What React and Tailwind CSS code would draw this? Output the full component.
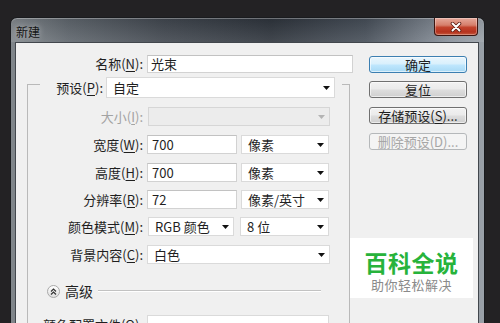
import React from "react";

const Arrow = ({ disabled }) => (
  <svg width="7" height="4" viewBox="0 0 7 4" className="shrink-0">
    <path d="M0 0H7L3.5 4Z" fill={disabled ? "#b4b4b4" : "#111"} />
  </svg>
);

const U = ({ children }) => (
  <span className="underline underline-offset-[2px] decoration-[1px]">{children}</span>
);

function Select({ className, children, disabled }) {
  return (
    <div
      className={
        "h-[19px] border flex items-center justify-between pl-[6px] pr-[4px] " +
        (disabled ? "bg-[#ececec] border-[#d6d6d6]" : "bg-white border-[#dadada]") +
        " " +
        className
      }
    >
      <span className="leading-[17px] whitespace-nowrap">{children}</span>
      <Arrow disabled={disabled} />
    </div>
  );
}

function Input({ className, children }) {
  return (
    <div
      className={
        "h-[19px] bg-white border border-[#d2d2d2] border-t-[#c2c2c2] flex items-center pl-[4px] leading-[17px] " +
        className
      }
    >
      {children}
    </div>
  );
}

function Row({ label, disabled, children, className }) {
  return (
    <div className={"flex items-center h-[19px] " + (className || "")}>
      <div
        className={
          "w-[115px] text-right whitespace-nowrap leading-[19px] " +
          (disabled ? "text-[#a3a3a3]" : "")
        }
      >
        {label}
      </div>
      <div className="ml-[4px] flex items-center">{children}</div>
    </div>
  );
}

function Btn({ children, variant }) {
  let cls =
    "h-[17px] w-[98px] rounded-[3px] border flex items-center justify-center text-[13px] leading-[15px] whitespace-nowrap ";
  if (variant === "default")
    cls +=
      "border-[#3c7fb1] bg-[linear-gradient(to_bottom,#eaf6fd_0%,#d9f0fc_45%,#bee6fd_55%,#a7d9f5_100%)] shadow-[inset_0_0_0_1px_rgba(255,255,255,0.6)]";
  else if (variant === "disabled")
    cls += "border-[#b5b8ba] bg-[#f4f4f4] text-[#a6a6a6]";
  else
    cls +=
      "border-[#707070] bg-[linear-gradient(to_bottom,#f2f2f2_0%,#ebebeb_45%,#dddddd_55%,#cfcfcf_100%)] shadow-[inset_0_0_0_1px_rgba(255,255,255,0.6)]";
  return <div className={cls}>{children}</div>;
}

export default function App() {
  return (
    <div className="relative w-[500px] h-[323px] overflow-hidden bg-[#232224] pt-[17px] pl-[10px] [font-family:'Noto_Sans_CJK_SC','Noto_Sans',sans-serif] text-[13px] text-[#1f1f1f]">
      <div className="w-[475px] h-[320px] rounded-t-[7px] border border-[#191b1e] bg-[linear-gradient(to_right,#80868b_0%,#5d646b_12%,#40464e_32%,#2d333b_55%,#454d57_75%,#88909a_93%,#9aa1a8_100%)] flex flex-col shadow-[inset_0_1px_0_rgba(255,255,255,0.35)]">
        {/* title bar */}
        <div className="h-[24px] shrink-0 flex justify-between bg-[linear-gradient(to_bottom,rgba(0,0,0,0.08),rgba(255,255,255,0.1))]">
          <span className="pl-[5px] pt-[8px] text-[12px] leading-[12px] text-[#141414] [text-shadow:0_0_6px_rgba(255,255,255,0.55)]">
            新建
          </span>
          <div className="mr-[6px] w-[44px] h-[18px] rounded-b-[4px] border border-t-0 border-[#3d1510] bg-[linear-gradient(to_bottom,#e6a99b_0%,#d67f6b_42%,#c2432c_55%,#b5321e_82%,#c65a3d_100%)] flex items-center justify-center shadow-[inset_0_0_0_1px_rgba(255,255,255,0.3)]">
            <svg width="12" height="10" viewBox="0 0 12 10">
              <path d="M2.5 1.5L9.5 8.5M9.5 1.5L2.5 8.5" stroke="#5a1a10" strokeWidth="3.6" strokeLinecap="round" />
              <path d="M2.5 1.5L9.5 8.5M9.5 1.5L2.5 8.5" stroke="#fff" strokeWidth="2" strokeLinecap="round" />
            </svg>
          </div>
        </div>
        {/* client */}
        <div className="ml-[4px] mr-[5px] flex-1 border border-b-0 border-[#42474d] bg-[#f0f0f0]">
          <div className="flex pt-[12px]">
            <div className="w-[353px] shrink-0">
              <div className="flex items-center h-[18px]">
                <div className="w-[127px] text-right whitespace-nowrap leading-[18px]">
                  名称(<U>N</U>):
                </div>
                <div className="ml-[4px] w-[206px] h-[18px] bg-white border border-[#d2d2d2] border-t-[#c2c2c2] flex items-center pl-[3px] leading-[16px]">
                  光束
                </div>
              </div>

              {/* group box */}
              <div className="ml-[11px] mt-[11px] w-[323px] h-[300px] border border-b-0 border-[#b9b9b9]">
                <div className="-mt-[8px] ml-[12px] w-[302px] h-[21px] bg-[#f0f0f0] flex items-center">
                  <div className="w-[63px] text-right whitespace-nowrap leading-[21px]">
                    预设(<U>P</U>):
                  </div>
                  <div className="ml-[3px] w-[229px] h-[21px] bg-white border border-[#dadada] flex items-center justify-between pl-[6px] pr-[4px]">
                    <span className="leading-[19px]">自定</span>
                    <Arrow />
                  </div>
                </div>

                <Row className="mt-[9px]" disabled label={<>大小(<U>I</U>):</>}>
                  <div className="ml-[1px]">
                    <Select disabled className="w-[182px]"> </Select>
                  </div>
                </Row>
                <Row className="mt-[9px]" label={<>宽度(<U>W</U>):</>}>
                  <Input className="w-[90px]">700</Input>
                  <Select className="ml-[4px] w-[88px]">像素</Select>
                </Row>
                <Row className="mt-[9px]" label={<>高度(<U>H</U>):</>}>
                  <Input className="w-[90px]">700</Input>
                  <Select className="ml-[4px] w-[88px]">像素</Select>
                </Row>
                <Row className="mt-[8px]" label={<>分辨率(<U>R</U>):</>}>
                  <Input className="w-[90px]">72</Input>
                  <Select className="ml-[4px] w-[88px]">像素/英寸</Select>
                </Row>
                <Row className="mt-[8px]" label={<>颜色模式(<U>M</U>):</>}>
                  <Select className="ml-[1px] w-[86px]">RGB 颜色</Select>
                  <Select className="ml-[6px] w-[89px]">8 位</Select>
                </Row>
                <Row className="mt-[9px]" label={<>背景内容(<U>C</U>):</>}>
                  <Select className="w-[183px]">白色</Select>
                </Row>

                {/* advanced */}
                <div className="mt-[20px] h-[14px] flex items-center">
                  <div className="ml-[19px] w-[13px] h-[13px] rounded-full border border-[#a9a9a9] bg-[linear-gradient(to_bottom,#ffffff,#dedede)] flex items-center justify-center">
                    <svg width="9" height="9" viewBox="0 0 9 9">
                      <path d="M2 4.5L4.5 2L7 4.5M2 7.5L4.5 5L7 7.5" stroke="#333" strokeWidth="1.2" fill="none" />
                    </svg>
                  </div>
                  <span className="ml-[5px] leading-[14px] text-[14px]">高级</span>
                  <div className="ml-[5px] mr-[28px] flex-1 h-[2px] border-t border-[#c2c2c2] border-b border-b-white" />
                </div>

                <Row className="mt-[17px]" label={<>颜色配置文件(<U>O</U>):</>}>
                  <Select className="w-[182px]"> </Select>
                </Row>
              </div>
            </div>

            {/* buttons */}
            <div className="w-[98px] mt-[1px] flex flex-col">
              <Btn variant="default">确定</Btn>
              <div className="mt-[8px]">
                <Btn>复位</Btn>
              </div>
              <div className="mt-[9px]">
                <Btn>
                  存储预设(<U>S</U>)...
                </Btn>
              </div>
              <div className="mt-[9px]">
                <Btn variant="disabled">
                  删除预设(<U>D</U>)...
                </Btn>
              </div>
            </div>
          </div>
        </div>
      </div>

      {/* watermark overlay */}
      <div className="absolute left-[350px] top-[238px] w-[123px] h-[60px] bg-white flex flex-col items-center pt-[13px]">
        <div className="text-[23px] leading-[23px] font-bold text-[#27b33b] tracking-[0.5px]">百科全说</div>
        <div className="mt-[4px] text-[13px] leading-[14px] text-[#8a8a8a] tracking-[0.5px]">助你轻松解决</div>
      </div>
    </div>
  );
}
